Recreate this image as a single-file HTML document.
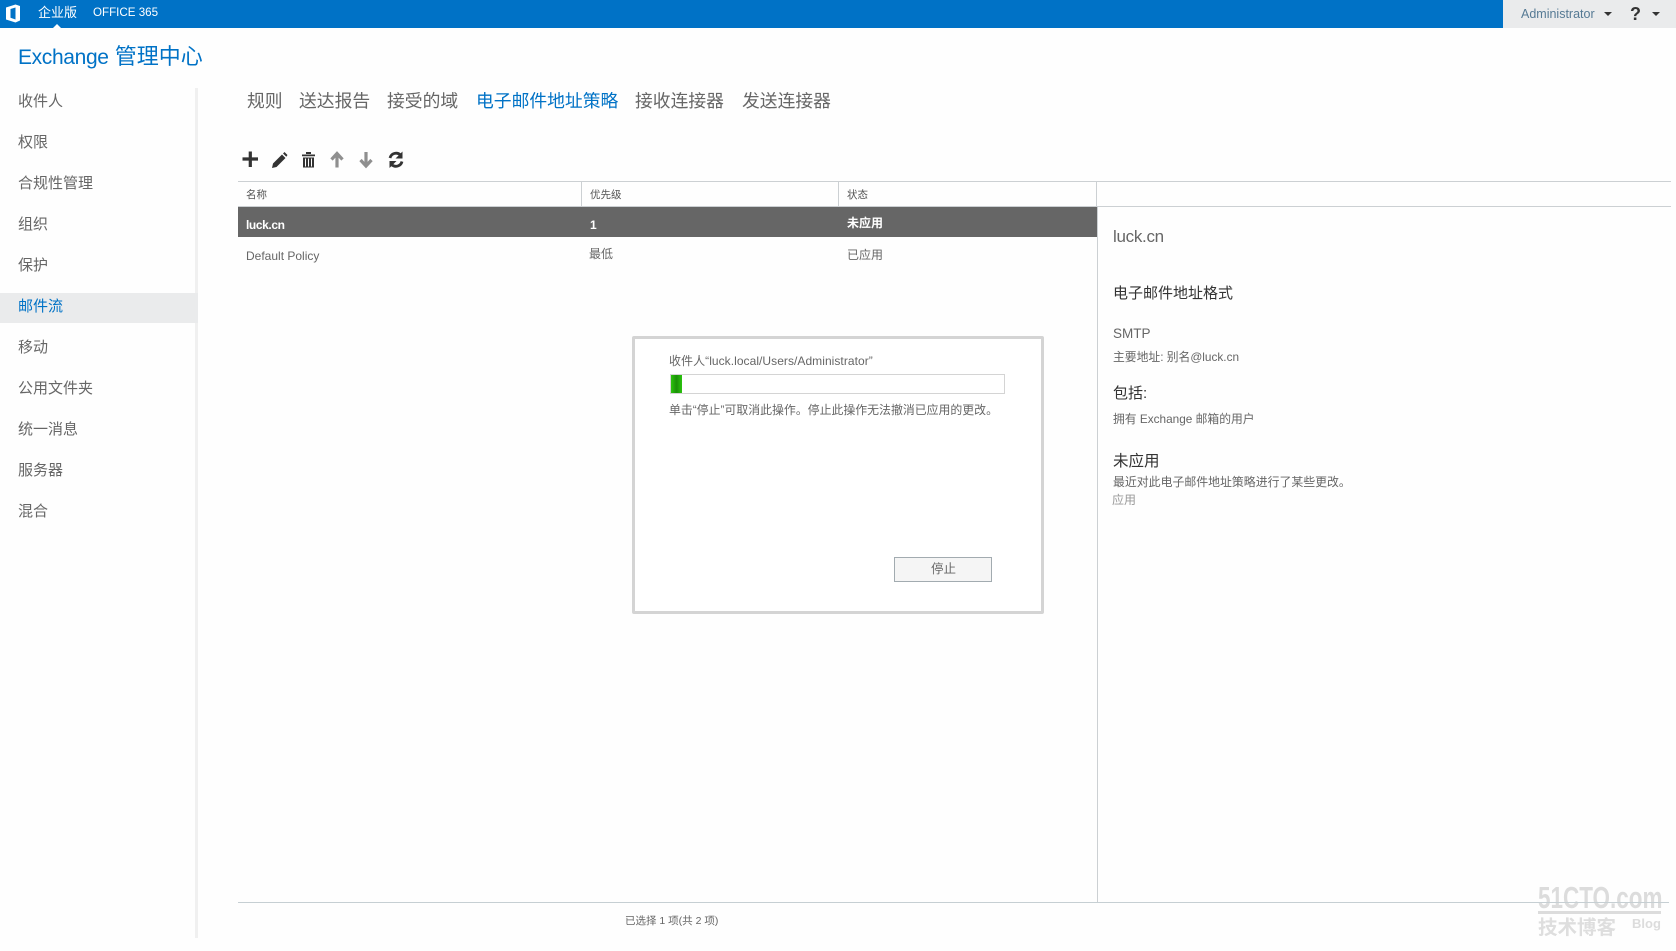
<!DOCTYPE html>
<html lang="zh-CN">
<head>
<meta charset="utf-8">
<title>Exchange 管理中心</title>
<style>
html,body{margin:0;padding:0;width:1676px;height:951px;overflow:hidden;background:#fefefe;}
body{position:relative;font-family:"Liberation Sans","Noto Sans CJK SC",sans-serif;color:#666;}
.a{position:absolute;white-space:nowrap;line-height:1;}
.b{position:absolute;}
.nav{font-size:15px;left:18px;color:#666;}
.tab{font-size:17.8px;top:93px;color:#666;}
.th{font-size:10.5px;top:190px;color:#555;}
svg{position:absolute;overflow:visible;}
</style>
</head>
<body>
<!-- top bar -->
<div class="b" style="left:0;top:0;width:1503px;height:28px;background:#0072c6;"></div>
<div class="b" style="left:1503px;top:0;width:173px;height:28px;background:#eaebec;"></div>
<svg style="left:5px;top:4px;" width="18" height="19" viewBox="0 0 18 19"><path d="M1 3.500 10.500 0.500 15 2V16.500L10.500 18.500 1 15.500ZM10.500 3.500 5.500 5V13.800L10.500 15.500Z" fill="#fff" fill-rule="evenodd"/></svg>
<div class="a" style="left:38px;top:6px;font-size:13px;color:#fff;">企业版</div>
<div class="a" style="left:93px;top:7px;font-size:11.6px;color:#fff;">OFFICE 365</div>
<div class="b" style="left:53px;top:24px;width:0;height:0;border-left:4px solid transparent;border-right:4px solid transparent;border-bottom:4px solid #fff;"></div>
<div class="a" style="left:1521px;top:8px;font-size:12.500px;color:#567a94;">Administrator</div>
<div class="b" style="left:1604px;top:12px;width:0;height:0;border-left:4px solid transparent;border-right:4px solid transparent;border-top:4px solid #333;"></div>
<div class="a" style="left:1630px;top:5px;font-size:18px;font-weight:bold;color:#333;">?</div>
<div class="b" style="left:1652px;top:12px;width:0;height:0;border-left:4px solid transparent;border-right:4px solid transparent;border-top:4px solid #333;"></div>

<!-- title -->
<div class="a" style="left:18px;top:46px;font-size:22px;color:#0072c6;"><span style="font-size:21px;letter-spacing:-.35px;">Exchange</span> 管理中心</div>

<!-- sidebar -->
<div class="b" style="left:195px;top:88px;width:3px;height:850px;background:#f0f0f0;"></div>
<div class="b" style="left:0;top:293px;width:198px;height:30px;background:#eaebec;"></div>
<div class="a nav" style="top:94px;">收件人</div>
<div class="a nav" style="top:135px;">权限</div>
<div class="a nav" style="top:176px;">合规性管理</div>
<div class="a nav" style="top:217px;">组织</div>
<div class="a nav" style="top:258px;">保护</div>
<div class="a nav" style="top:299px;color:#0072c6;">邮件流</div>
<div class="a nav" style="top:340px;">移动</div>
<div class="a nav" style="top:381px;">公用文件夹</div>
<div class="a nav" style="top:422px;">统一消息</div>
<div class="a nav" style="top:463px;">服务器</div>
<div class="a nav" style="top:504px;">混合</div>

<!-- tabs -->
<div class="a tab" style="left:247px;">规则</div>
<div class="a tab" style="left:299px;">送达报告</div>
<div class="a tab" style="left:387px;">接受的域</div>
<div class="a tab" style="left:476px;color:#0072c6;">电子邮件地址策略</div>
<div class="a tab" style="left:635px;">接收连接器</div>
<div class="a tab" style="left:742px;">发送连接器</div>

<!-- toolbar -->
<svg style="left:238px;top:146px;" width="170" height="30" viewBox="0 0 170 30">
<path d="M4.500 13H20M12.300 5.500V21" stroke="#333" stroke-width="3.200" fill="none"/>
<path d="M34 22 35 17.500 44 8.500 47.500 12 38.500 21ZM45 7.500 46.500 6 49.500 9 48.300 10.800Z" fill="#333"/>
<path d="M64 8.500H77V10.200H64ZM68 6H73V8H68ZM65 11.500H76V21.500H65Z" fill="#333"/>
<path d="M67.500 12.500V20.500M70.500 12.500V20.500M73.500 12.500V20.500" stroke="#fff" stroke-width="1"/>
<path d="M99 21.500V9M93.500 13.500 99 7.500 104.500 13.500" stroke="#8f8f8f" stroke-width="3.200" fill="none"/>
<path d="M128 6V18.500M122.500 14 128 20 133.500 14" stroke="#8f8f8f" stroke-width="3.200" fill="none"/>
<path d="M152 12A6.300 6.300 0 0 1 162.500 9" stroke="#333" stroke-width="2.800" fill="none"/>
<path d="M164.500 5.500V12.500H157.500Z" fill="#333"/>
<path d="M164 15.500A6.300 6.300 0 0 1 153.500 18.500" stroke="#333" stroke-width="2.800" fill="none"/>
<path d="M151.500 22V15H158.500Z" fill="#333"/>
</svg>

<!-- table header -->
<div class="b" style="left:238px;top:181px;width:1433px;height:1px;background:#ccd0d3;"></div>
<div class="b" style="left:238px;top:206px;width:1433px;height:1px;background:#ccd0d3;"></div>
<div class="b" style="left:581px;top:182px;width:1px;height:24px;background:#ccd0d3;"></div>
<div class="b" style="left:838px;top:182px;width:1px;height:24px;background:#ccd0d3;"></div>
<div class="b" style="left:1096px;top:182px;width:1px;height:24px;background:#ccd0d3;"></div>
<div class="a th" style="left:246px;">名称</div>
<div class="a th" style="left:590px;">优先级</div>
<div class="a th" style="left:847px;">状态</div>

<!-- rows -->
<div class="b" style="left:238px;top:207px;width:859px;height:30px;background:#666;"></div>
<div class="a" style="left:246px;top:219px;font-size:12px;font-weight:bold;color:#fff;letter-spacing:-.4px;">luck.cn</div>
<div class="a" style="left:590px;top:219px;font-size:12px;font-weight:bold;color:#fff;">1</div>
<div class="a" style="left:847px;top:217px;font-size:12px;font-weight:bold;color:#fff;">未应用</div>
<div class="a" style="left:246px;top:250px;font-size:12px;color:#666;">Default Policy</div>
<div class="a" style="left:589px;top:248px;font-size:12px;color:#666;">最低</div>
<div class="a" style="left:847px;top:249px;font-size:12px;color:#666;">已应用</div>

<!-- right panel -->
<div class="b" style="left:1097px;top:206px;width:1px;height:696px;background:#ccd0d3;"></div>
<div class="a" style="left:1113px;top:228px;font-size:17px;letter-spacing:-.3px;color:#666;">luck.cn</div>
<div class="a" style="left:1113px;top:286px;font-size:15px;color:#333;">电子邮件地址格式</div>
<div class="a" style="left:1113px;top:327px;font-size:13.5px;color:#666;">SMTP</div>
<div class="a" style="left:1113px;top:352px;font-size:11.8px;color:#666;">主要地址: 别名@luck.cn</div>
<div class="a" style="left:1113px;top:386px;font-size:15px;color:#333;">包括:</div>
<div class="a" style="left:1113px;top:414px;font-size:11.8px;color:#666;">拥有 Exchange 邮箱的用户</div>
<div class="a" style="left:1113px;top:454px;font-size:15.500px;color:#333;">未应用</div>
<div class="a" style="left:1113px;top:477px;font-size:11.9px;color:#666;">最近对此电子邮件地址策略进行了某些更改。</div>
<div class="a" style="left:1112px;top:494px;font-size:12px;color:#999;">应用</div>

<!-- dialog -->
<div class="b" style="left:632px;top:336px;width:406px;height:272px;border:3px solid #d4d4d4;border-radius:2px;background:#fff;"></div>
<div class="a" style="left:669px;top:355px;font-size:12px;letter-spacing:.05px;color:#666;">收件人“luck.local/Users/Administrator”</div>
<div class="b" style="left:670px;top:374px;width:333px;height:18px;border:1px solid #d4d4d4;background:#fff;"></div>
<div class="b" style="left:671px;top:375px;width:11px;height:18px;background:linear-gradient(90deg,#2cc40e,#1a8f08 50%,#2cc40e);"></div>
<div class="a" style="left:669px;top:405px;font-size:11.9px;color:#666;">单击“停止”可取消此操作。停止此操作无法撤消已应用的更改。</div>
<div class="b" style="left:894px;top:557px;width:96px;height:23px;border:1px solid #a2abb0;background:#f5f5f5;"></div>
<div class="a" style="left:931px;top:563px;font-size:12.500px;color:#666;">停止</div>

<!-- watermark -->
<div class="a" style="left:1538px;top:882px;font-size:31px;font-weight:bold;color:#dcdcdc;transform:scaleX(.725);transform-origin:0 0;">51CTO.com</div>
<div class="b" style="left:1538px;top:911px;width:123px;height:3px;background:#dcdcdc;"></div>
<div class="a" style="left:1538px;top:919px;font-size:19.500px;font-weight:bold;color:#dedede;">技术博客</div>
<div class="a" style="left:1632px;top:917px;font-size:13px;font-weight:bold;color:#dcdcdc;">Blog</div>

<!-- footer -->
<div class="b" style="left:238px;top:902px;width:1431px;height:1px;background:#c6cfd3;"></div>
<div class="a" style="left:625px;top:916px;font-size:10.500px;color:#666;">已选择 1 项(共 2 项)</div>
</body>
</html>
